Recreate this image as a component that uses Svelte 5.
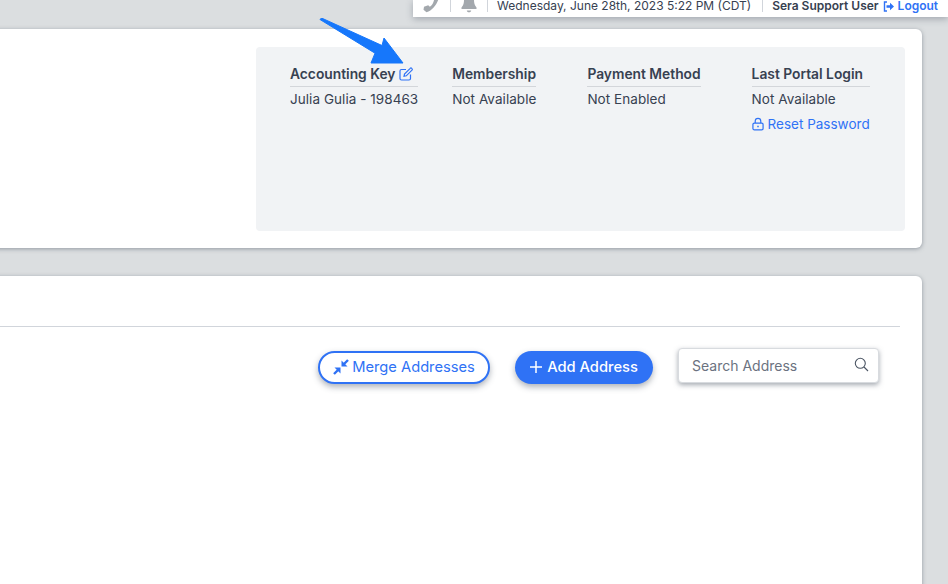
<script lang="ts">
	const infoColumns = [
		{ title: 'Accounting Key', value: 'Julia Gulia - 198463', edit: true, reset: false, left: 34 },
		{ title: 'Membership', value: 'Not Available', edit: false, reset: false, left: 34 },
		{ title: 'Payment Method', value: 'Not Enabled', edit: false, reset: false, left: 51 },
		{ title: 'Last Portal Login', value: 'Not Available', edit: false, reset: true, left: 51 }
	];
</script>

<div class="page">
	<header class="topbar">
		<svg class="top-icon phone" width="20" height="13" viewBox="0 4 20 13" aria-hidden="true">
			<path d="M15 -6l3.500 1.200c.6 8-4.500 18.500-13 21l-3-2.500 .5-3 4.200-1.400 1.700 1.500c2.500-1.500 4-5 4.300-8l-2-1z" />
		</svg>
		<span class="sep"></span>
		<svg class="top-icon bell" width="18" height="13" viewBox="0 2 18 13" aria-hidden="true">
			<path d="M9 -4c3.500 0 5 2.500 5 6 0 3 .5 5 2.500 7.500v1.500h-15v-1.500c2-2.500 2.500-4.500 2.500-7.500 0-3.500 1.500-6 5-6z" />
			<path d="M6.800 12.500h4.400c0 1.200-1 1.800-2.200 1.800s-2.200-.6-2.200-1.800z" />
		</svg>
		<span class="sep"></span>
		<span class="date">Wednesday, June 28th, 2023 5:22 PM (CDT)</span>
		<span class="sep"></span>
		<strong class="user">Sera Support User</strong>
		<a class="logout" href="#top">
			<svg width="12" height="11" viewBox="0 0 12 11" fill="none" aria-hidden="true">
				<path d="M4 1H1.500v9H4" stroke="currentColor" stroke-width="1.400" />
				<path d="M3.500 4.200h3.500V1.800l4 3.700-4 3.700V6.800H3.500z" fill="currentColor" />
			</svg>
			Logout
		</a>
	</header>

	<section class="card summary">
		<div class="panel">
			{#each infoColumns as col}
				<div class="col" style="margin-left: {col.left}px">
					<div class="col-title">
						{col.title}
						{#if col.edit}
							<svg class="edit" width="14" height="14" viewBox="0 0 14 14" fill="none" stroke="currentColor" stroke-width="1.200" aria-hidden="true">
								<path d="M7 2.500H2.500a1.500 1.500 0 0 0-1.500 1.500v7.500a1.500 1.500 0 0 0 1.500 1.500H10a1.500 1.500 0 0 0 1.500-1.500V7.500" />
								<path d="M5 9.300l.5-2.300 5.700-5.700a1 1 0 0 1 1.500 0l.3.300a1 1 0 0 1 0 1.500L7.300 8.800z" />
							</svg>
						{/if}
					</div>
					<div class="col-value">{col.value}</div>
					{#if col.reset}
						<a class="reset" href="#top">
							<svg width="12" height="14" viewBox="0 0 13 14" fill="none" stroke="currentColor" stroke-width="1.300" aria-hidden="true">
								<rect x="1" y="6" width="11" height="7.300" rx="1.500" />
								<path d="M3.500 6V3.800a3 3 0 0 1 6 0V6" />
								<path d="M6.500 9v1.500" stroke-width="1.600" />
							</svg>
							Reset Password
						</a>
					{/if}
				</div>
			{/each}
		</div>
	</section>

	<section class="card addresses">
		<div class="rule"></div>
		<div class="actions">
			<button class="btn outline">
				<svg width="16" height="16" viewBox="0 0 16 16" aria-hidden="true">
					<path d="M8.500 1.500v6h6z" fill="currentColor" />
					<path d="M7.500 14.500v-6h-6z" fill="currentColor" />
					<path d="M11 5l4-4M5 11l-4 4" stroke="currentColor" stroke-width="2.400" />
				</svg>
				Merge Addresses
			</button>
			<button class="btn solid">
				<svg width="12" height="12" viewBox="0 0 12 12" fill="none" stroke="currentColor" stroke-width="1.500" aria-hidden="true">
					<path d="M6 0v12M0 6h12" />
				</svg>
				Add Address
			</button>
			<div class="search">
				<span class="placeholder">Search Address</span>
				<svg class="search-icon" width="15" height="15" viewBox="0 0 15 15" fill="none" stroke="#4b5563" stroke-width="1.100" aria-hidden="true">
					<circle cx="6.300" cy="6.300" r="5" />
					<path d="M10 10l4 4" />
				</svg>
			</div>
		</div>
	</section>

	<svg class="arrow" width="100" height="56" viewBox="0 0 100 56" aria-hidden="true">
		<path d="M1 1.500L2.500 0 63 27.500 65 20 84 45 52 45 56 35.200z" fill="#1677fb" stroke="#1677fb" stroke-linejoin="round" />
	</svg>
</div>

<style>
	:global(body) {
		margin: 0;
		overflow: hidden;
		background: #dbdee0;
	}

	.page {
		position: relative;
		width: 948px;
		height: 584px;
		overflow: hidden;
		font-family: Inter, 'Liberation Sans', sans-serif;
		font-size: 13.5px;
		color: #374151;
	}

	.topbar {
		display: flex;
		align-items: flex-start;
		height: 17px;
		margin-left: 413px;
		width: 535px;
		box-sizing: border-box;
		padding: 0 8px;
		background: #fff;
		box-shadow: 0 2px 7px rgba(75, 85, 99, 0.4);
		font-size: 12px;
		line-height: 12px;
		overflow: hidden;
	}

	.top-icon {
		fill: #a3a8ad;
		flex: none;
	}

	.sep {
		flex: none;
		width: 1px;
		height: 12px;
		background: #d1d5db;
		margin: 0 9px;
	}

	.date {
		color: #374151;
		white-space: nowrap;
		margin-right: 2px;
	}

	.user {
		font-weight: 600;
		color: #374151;
		white-space: nowrap;
	}

	.logout {
		display: flex;
		align-items: center;
		gap: 3px;
		margin-left: 4px;
		color: #2f72f5;
		font-weight: 600;
		text-decoration: none;
		white-space: nowrap;
	}

	.card {
		margin-left: -20px;
		width: 942px;
		box-sizing: border-box;
		background: #fff;
		border-radius: 6px;
		box-shadow: 0 1px 4px rgba(75, 85, 99, 0.5);
	}

	.summary {
		height: 219px;
		margin-top: 12px;
		padding: 18px 17px 0 276px;
	}

	.panel {
		display: flex;
		height: 184px;
		padding-top: 18px;
		box-sizing: border-box;
		background: #f1f3f5;
		border-radius: 4px;
	}

	.col {
		display: flex;
		flex-direction: column;
		align-items: flex-start;
	}

	.col-title {
		display: flex;
		align-items: flex-start;
		gap: 4px;
		align-self: stretch;
		height: 22px;
		box-sizing: border-box;
		border-bottom: 1px solid #d3d6da;
		font-size: 13.8px;
		line-height: 18px;
		font-weight: 600;
		color: #374151;
		white-space: nowrap;
	}

	.edit {
		color: #2f72f5;
		margin-top: 2px;
	}

	.col-value {
		margin-top: 3px;
		line-height: 18px;
		white-space: nowrap;
		letter-spacing: 0.05px;
	}

	.reset {
		display: flex;
		align-items: center;
		gap: 4px;
		margin-top: 7px;
		line-height: 18px;
		color: #2f72f5;
		text-decoration: none;
		white-space: nowrap;
	}

	.addresses {
		height: 340px;
		margin-top: 28px;
		padding: 50px 22px 0 20px;
	}

	.rule {
		height: 1px;
		background: #d1d5db;
	}

	.actions {
		display: flex;
		align-items: flex-start;
		justify-content: flex-end;
		margin-top: 21px;
		padding-right: 21px;
	}

	.btn {
		display: flex;
		align-items: center;
		justify-content: center;
		height: 33px;
		margin-top: 3px;
		padding: 0 0 2px;
		box-sizing: border-box;
		border-radius: 17px;
		font-family: inherit;
		font-size: 14.7px;
		box-shadow: 0 3px 6px rgba(75, 85, 99, 0.45);
	}

	.outline {
		width: 172px;
		gap: 3px;
		margin-right: 25px;
		background: #fff;
		border: 2px solid #2f72f5;
		color: #2f72f5;
	}

	.solid {
		width: 138px;
		gap: 5px;
		margin-right: 25px;
		background: #2f72f5;
		border: none;
		color: #fff;
		font-weight: 500;
	}

	.search {
		display: flex;
		align-items: center;
		justify-content: space-between;
		width: 201px;
		height: 35px;
		box-sizing: border-box;
		padding: 0 9px 0 13px;
		background: #fff;
		border: 1px solid #d8dbdf;
		border-radius: 4px;
		box-shadow: 0 2px 5px rgba(75, 85, 99, 0.5);
	}

	.search-icon {
		margin-bottom: 3px;
	}

	.placeholder {
		font-size: 14px;
		color: #6b7280;
	}

	.arrow {
		position: absolute;
		left: 319px;
		top: 18px;
	}
</style>
